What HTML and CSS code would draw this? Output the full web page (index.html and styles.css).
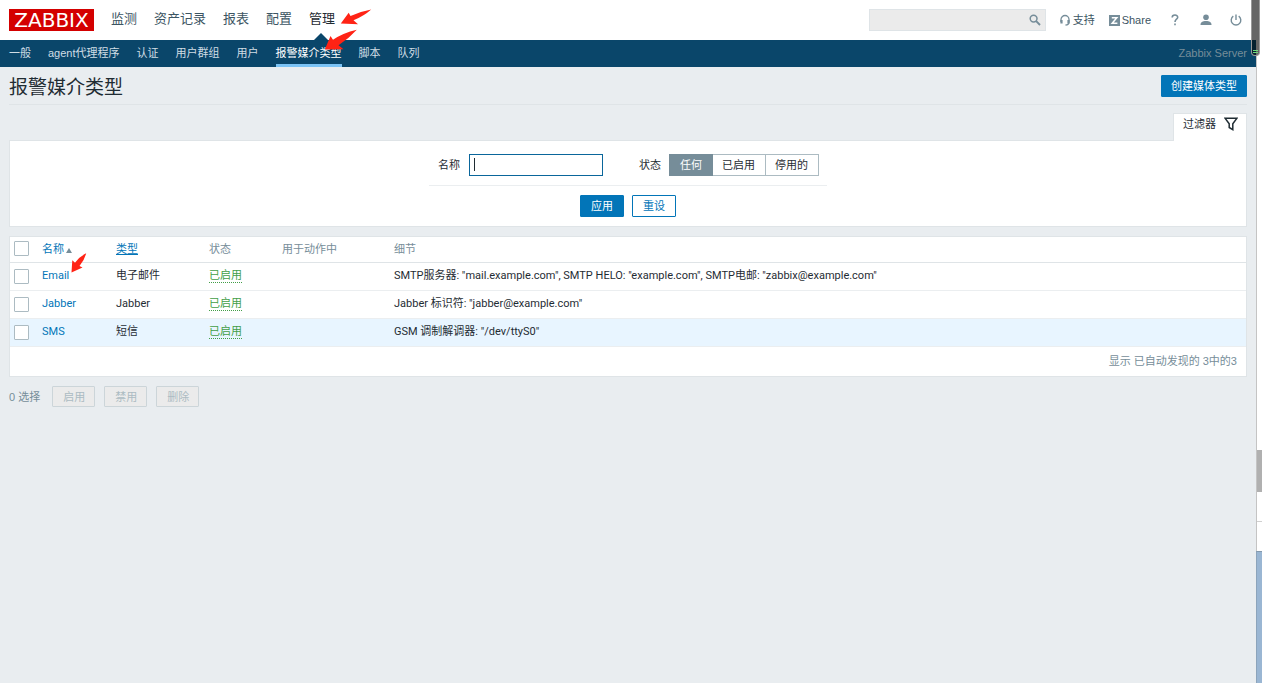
FILE: index.html
```html
<!DOCTYPE html>
<html lang="zh-CN">
<head>
<meta charset="utf-8">
<title>报警媒介类型</title>
<link rel="stylesheet" href="styles.css">
</head>
<body>
<div class="screen">
  <div class="app">
    <header class="top">
      <a class="logo" href="#">
        <svg width="85" height="22" viewBox="0 0 85 22" role="img" aria-label="ZABBIX">
          <rect width="85" height="22" fill="#d40000"/>
          <text x="42.5" y="18" text-anchor="middle" class="logo-text">ZABBIX</text>
        </svg>
      </a>
      <nav class="menu">
        <a href="#">监测</a>
        <a href="#">资产记录</a>
        <a href="#">报表</a>
        <a href="#">配置</a>
        <a href="#" class="current">管理</a>
      </nav>
      <div class="tools">
        <form class="search">
          <input type="text" aria-label="搜索">
          <button type="button" aria-label="搜索">
            <svg width="12" height="12" viewBox="0 0 12 12" fill="none" stroke="#768d99"><circle cx="4.6" cy="4.6" r="3.4" stroke-width="1.5"/><path d="M7.2 7.2L11 11" stroke-width="1.9"/></svg>
          </button>
        </form>
        <a href="#" class="tool support">
          <svg width="10" height="12" viewBox="0 0 10 12" fill="none" stroke="#768d99"><path d="M1 8V5.500a4 4 0 0 1 8 0V8c0 2-1 3-3.500 3" stroke-width="1.300"/><path d="M1.500 6v3.500M8.500 6v3.500" stroke-width="2.200"/></svg>
          支持</a>
        <a href="#" class="tool share">
          <svg width="11" height="11" viewBox="0 0 11 11"><rect width="11" height="11" fill="#768d99"/><path d="M2.800 2.800h5L3.200 8.200H8.400" fill="none" stroke="#fff" stroke-width="1.500"/></svg>
          Share</a>
        <a href="#" class="tool help" aria-label="帮助">
          <svg width="8" height="12" viewBox="0 0 8 12" fill="none" stroke="#768d99" stroke-width="1.600"><path d="M1.200 3.500C1.200.300 6.700.300 6.700 3.200C6.700 5.200 4 5.300 4 8"/><path d="M4 9.500v1.700"/></svg>
        </a>
        <a href="#" class="tool user" aria-label="用户">
          <svg width="12" height="12" viewBox="0 0 12 12" fill="#768d99"><circle cx="6" cy="3.300" r="2.800"/><path d="M.500 11c0-3 2-4 5.500-4s5.500 1 5.500 4z"/></svg>
        </a>
        <a href="#" class="tool power" aria-label="退出">
          <svg width="12" height="12" viewBox="0 0 12 12" fill="none" stroke="#768d99" stroke-width="1.400"><path d="M3.300 2.200a4.800 4.800 0 1 0 5.400 0M6 .500v5.500"/></svg>
        </a>
      </div>
    </header>
    <nav class="submenu">
      <a href="#">一般</a>
      <a href="#">agent代理程序</a>
      <a href="#">认证</a>
      <a href="#">用户群组</a>
      <a href="#">用户</a>
      <a href="#" class="selected">报警媒介类型</a>
      <a href="#">脚本</a>
      <a href="#">队列</a>
      <span class="server">Zabbix Server</span>
    </nav>
    <main>
      <div class="title-row">
        <h1>报警媒介类型</h1>
        <button type="button" class="btn primary create">创建媒体类型</button>
      </div>
      <div class="filter-tab-row">
        <button type="button" class="filter-tab">过滤器
          <svg width="14" height="14" viewBox="0 0 14 14" fill="none" stroke="#1f2c33" stroke-width="1.500"><path d="M1 1.200h12L8.800 6.800V12.600L5.200 10.500V6.800z"/></svg>
        </button>
      </div>
      <form class="filter">
        <div class="fields">
          <label for="name">名称</label>
          <input id="name" class="name" type="text">
          <span id="state">状态</span>
          <div class="segments" role="radiogroup" aria-labelledby="state">
            <label><input type="radio" name="state" checked><span>任何</span></label>
            <label><input type="radio" name="state"><span>已启用</span></label>
            <label><input type="radio" name="state"><span>停用的</span></label>
          </div>
        </div>
        <div class="filter-buttons">
          <button type="button" class="btn primary">应用</button>
          <button type="button" class="btn outline">重设</button>
        </div>
      </form>
      <div class="list">
        <table>
          <colgroup><col class="c-check"><col class="c-name"><col class="c-type"><col class="c-state"><col class="c-used"><col></colgroup>
          <thead>
            <tr>
              <th><input type="checkbox" aria-label="全选"></th>
              <th><a href="#">名称<svg class="sort" width="6" height="5" viewBox="0 0 6 5"><path d="M0 5L3 0L6 5z" fill="#768d99"/></svg></a></th>
              <th><a href="#" class="sortable">类型</a></th>
              <th>状态</th>
              <th>用于动作中</th>
              <th>细节</th>
            </tr>
          </thead>
          <tbody>
            <tr>
              <td><input type="checkbox" aria-label="Email"></td>
              <td><a href="#">Email</a></td>
              <td>电子邮件</td>
              <td><a href="#" class="on">已启用</a></td>
              <td></td>
              <td>SMTP服务器: "mail.example.com", SMTP HELO: "example.com", SMTP电邮: "zabbix@example.com"</td>
            </tr>
            <tr>
              <td><input type="checkbox" aria-label="Jabber"></td>
              <td><a href="#">Jabber</a></td>
              <td>Jabber</td>
              <td><a href="#" class="on">已启用</a></td>
              <td></td>
              <td>Jabber 标识符: "jabber@example.com"</td>
            </tr>
            <tr class="hover">
              <td><input type="checkbox" aria-label="SMS"></td>
              <td><a href="#">SMS</a></td>
              <td>短信</td>
              <td><a href="#" class="on">已启用</a></td>
              <td></td>
              <td>GSM 调制解调器: "/dev/ttyS0"</td>
            </tr>
          </tbody>
        </table>
        <div class="count">显示 已自动发现的 3中的3</div>
      </div>
      <div class="actions">
        <span>0 选择</span>
        <button type="button" class="btn" disabled>启用</button>
        <button type="button" class="btn" disabled>禁用</button>
        <button type="button" class="btn" disabled>删除</button>
      </div>
    </main>
  </div>
  <aside class="edge">
    <div class="edge-track"></div>
    <div class="edge-thumb"></div>
    <div class="edge-mid"></div>
    <div class="edge-foot"></div>
    <div class="edge-blue"></div>
  </aside>
  <div class="capsule"><i></i></div>
  <svg class="marks" width="380" height="280" viewBox="0 0 380 280" fill="#ff2315" aria-hidden="true">
    <path d="M340.800 23.600L348.700 12.700L350.500 16Q360 11.500 371.200 9.500Q364 16 353.500 20.300L358 24.200z"/>
    <path d="M324.800 49.600L330.500 36L333 39.800Q343 33 356.800 29.800Q349 38.500 338.500 45.300L343.500 49.200z"/>
    <path d="M71.500 272.600L72.300 260.300L75 262.700Q79.500 256.500 86.200 253.300Q84.500 260 79.500 266L82.500 267.500z"/>
  </svg>
</div>
</body>
</html>
```
FILE: styles.css
```css
* { box-sizing: border-box; }
body {
  margin: 0;
  background: #e9edf0;
  color: #1f2c33;
  font: 11px/14px "Liberation Sans", "Noto Sans CJK SC", sans-serif;
}
a { color: #0275b8; text-decoration: none; }
button, input { font: inherit; color: inherit; margin: 0; }
svg { display: block; flex: none; }

.screen { position: relative; display: flex; min-height: 100vh; }
.app { flex: 1; min-width: 0; }

.top {
  display: flex;
  align-items: center;
  height: 40px;
  padding: 0 14px 0 9px;
  background: #fff;
}
.logo-text { font: 20px "DejaVu Sans", sans-serif; fill: #fff; }
.menu { display: flex; gap: 17px; margin-left: 17px; align-self: stretch; }
.menu a { position: relative; color: #3c5563; font-size: 13px; line-height: 38px; }
.menu .current { color: #1f2c33; }
.menu .current::after {
  content: "";
  position: absolute;
  left: 50%;
  bottom: 0;
  margin-left: -8px;
  border: 7px solid transparent;
  border-top: 0;
  border-bottom-color: #0a466a;
}
.tools { display: flex; align-items: center; margin-left: auto; }
.search {
  display: flex;
  align-items: center;
  width: 177px;
  height: 22px;
  margin-right: 14px;
  border: 1px solid #dfe4e7;
  background: #ebebeb;
}
.search input { flex: 1; min-width: 0; border: 0; background: none; outline: 0; }
.search button { padding: 0 4px; border: 0; background: none; }
.tool { display: flex; align-items: center; gap: 3px; color: #3c5563; }
.share { margin-left: 14px; gap: 2px; }
.help { margin-left: 20px; }
.user { margin-left: 21px; }
.power { margin-left: 18px; }

.submenu {
  display: flex;
  gap: 17px;
  height: 27px;
  padding: 0 9px;
  background: #0a466a;
  line-height: 26px;
}
.submenu a { color: #d0dde5; }
.submenu .selected { color: #fff; border-bottom: 3px solid #7bc3f5; }
.server { margin-left: auto; color: #768d99; }

main { padding: 0 9px; }
.title-row {
  display: flex;
  align-items: center;
  justify-content: space-between;
  height: 38px;
  border-bottom: 1px solid #dfe4e7;
}
h1 { margin: 0; padding-top: 4px; font-size: 19px; font-weight: 400; line-height: 34px; }
.btn {
  height: 22px;
  padding: 0 10px;
  border: 1px solid #0275b8;
  border-radius: 1px;
  line-height: 18px;
}
.btn.primary { background: #0275b8; color: #fff; }
.btn.create { padding: 0 9px; }
.btn.outline { background: #fff; color: #0275b8; }
.btn:disabled { height: 21px; padding: 0 9px 0 10px; border-color: #ccd5d9; background: #ebebeb; color: #acbbc2; }

.filter-tab-row { display: flex; justify-content: flex-end; margin-top: 8px; }
.filter-tab {
  position: relative;
  display: flex;
  align-items: center;
  gap: 8px;
  height: 28px;
  margin-bottom: -1px;
  padding: 0 8px 7px 9px;
  border: 1px solid #dfe4e7;
  border-bottom: 0;
  background: #fff;
}
.filter { padding: 13px 0 9px; border: 1px solid #dfe4e7; background: #fff; }
.fields {
  display: flex;
  align-items: center;
  width: max-content;
  margin: 0 auto;
  padding: 0 8px 9px 9px;
  border-bottom: 1px solid #ebeef0;
}
.name {
  width: 134px;
  height: 22px;
  margin: 0 36px 0 9px;
  padding: 0 4px;
  border: 1px solid #0a669b;
  background: linear-gradient(#1f2c33, #1f2c33) 4px 3px / 1px 13px no-repeat #fff;
  outline: 0;
}
.segments { display: flex; margin-left: 8px; }
.segments input { position: absolute; opacity: 0; }
.segments span { display: block; padding: 0 10px 0 9px; border: 1px solid #acbbc2; border-left: 0; line-height: 20px; }
.segments input:checked + span { padding-left: 11px; background: #768d99; border-color: #768d99; color: #fff; }
.filter-buttons { display: flex; justify-content: center; gap: 8px; margin-top: 9px; }

.list { margin-top: 9px; border: 1px solid #dfe4e7; background: #fff; }
table { width: 100%; table-layout: fixed; border-collapse: separate; border-spacing: 0; }
.c-check { width: 27px; }
.c-name { width: 74px; }
.c-type { width: 93px; }
.c-state { width: 73px; }
.c-used { width: 112px; }
th, td { height: 28px; padding: 0 0 1px 5px; border-bottom: 1px solid #ebeef0; text-align: left; white-space: nowrap; }
td { font-family: Roboto, "Noto Sans CJK SC", sans-serif; }
th { height: 26px; padding-bottom: 2px; border-bottom: 1px solid #dfe4e7; color: #768d99; font-weight: 400; }
.hover { background: #e8f5ff; }
.sort { display: inline-block; margin-left: 2px; }
.sortable { text-decoration: underline; }
.on { border-bottom: 1px dotted #429e47; color: #429e47; }
td input, th input {
  display: block;
  appearance: none;
  width: 15px;
  height: 15px;
  margin-left: -1px;
  border: 1px solid #acbbc2;
  border-radius: 1px;
  background: #fff;
}
.count { padding: 7px 9px 8px; color: #768d99; text-align: right; }
.actions { display: flex; align-items: center; gap: 9px; margin-top: 9px; color: #768d99; }
.actions span { margin-right: 3px; }

.edge { display: flex; flex-direction: column; width: 6px; border-left: 1px solid #c4c4c4; background: #fff; }
.edge-track { height: 450px; }
.edge-thumb { height: 42px; background: #b0b0b0; }
.edge-mid { height: 30px; border-bottom: 1px solid #d0d0d0; }
.edge-foot { height: 29px; }
.edge-blue { flex: 1; margin-left: -1px; border-top: 1px solid #8399ad; border-left: 1px solid #8ca4bb; background: #9ab6d3; }
.capsule {
  position: absolute;
  top: 0;
  right: 2px;
  width: 9px;
  height: 56px;
  border: 1px solid #999;
  border-top: 0;
  border-radius: 0 0 4px 4px;
  background: linear-gradient(90deg, transparent 4px, #666 4px) 0 40px no-repeat, linear-gradient(#666 40px, #04202f 40px);
}
.capsule i { position: absolute; left: 1px; bottom: 2px; width: 5px; height: 3px; border: 1px solid #6fdc7c; border-width: 1px 0; }
.marks { position: absolute; top: 0; left: 0; pointer-events: none; }
```
